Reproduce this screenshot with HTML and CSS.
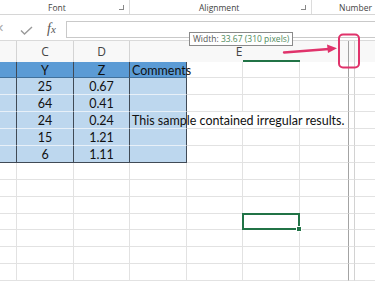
FILE: index.html
```html
<!DOCTYPE html>
<html lang="en">
<head>
  <meta charset="UTF-8">
  <title>Column width</title>
  <meta name="viewport" content="width=device-width, initial-scale=1.0">
  <link rel="stylesheet" href="styles.css">
</head>
<body>
  <div class="ribbon">
    <div class="group g-font"><span class="label">Font</span><i class="launcher"></i></div>
    <div class="group g-align"><span class="label">Alignment</span><i class="launcher"></i></div>
    <div class="group g-num"><span class="label">Number</span></div>
  </div>

  <div class="fbar">
    <span class="fb-x">✕</span>
    <svg class="fb-check" width="13" height="9" viewBox="0 0 13 9">
      <polyline points="1,4.5 4.5,8 12,1" fill="none" stroke="#9a9a9a" stroke-width="1.4"/>
    </svg>
    <span class="fb-fx">f<span class="sub">x</span></span>
    <div class="fb-input"></div>
  </div>

  <div class="colhead">
    <div class="hd hd-b"></div>
    <div class="hd hd-c">C</div>
    <div class="hd hd-d">D</div>
    <div class="hd hd-e">E</div>
    <div class="hd hd-gap"></div>
    <div class="hd hd-rest"></div>
  </div>

  <div class="grid" id="grid"></div>

  <div class="tip">Width: <span class="num">33.67 (310 pixels)</span></div>

  <svg class="marks" width="375" height="281" viewBox="0 0 375 281">
    <line x1="284" y1="52.5" x2="329" y2="49" stroke="#e0336b" stroke-width="2.4" stroke-linecap="round"/>
    <polygon points="337,48.3 327,44.6 328,53" fill="#e0336b"/>
    <rect x="339" y="34.5" width="20" height="33" rx="4" fill="none" stroke="#e0336b" stroke-width="2"/>
  </svg>

  <script>
    const cols = 9;
    const rows = 13;
    const table = [
      ["", "Y", "Z", "Comments"],
      ["", "25", "0.67", ""],
      ["", "64", "0.41", ""],
      ["", "24", "0.24", "This sample contained irregular results."],
      ["", "15", "1.21", ""],
      ["", "6", "1.11", ""]
    ];
    const grid = document.getElementById("grid");

    for (let r = 0; r < rows; r++) {
      for (let c = 0; c < cols; c++) {
        const cell = document.createElement("div");
        cell.className = "cell col" + c;

        if (r < table.length && c < 4) {
          cell.classList.add(r === 0 ? "th" : "td");
          if (r === table.length - 1) cell.classList.add("last");
          cell.textContent = table[r][c];
          if (c === 3) cell.classList.add("left");
        }
        // long comment spills over E..G, so those gridlines are hidden
        if (r === 3 && (c === 4 || c === 5)) cell.classList.add("spill");
        if (r === 9 && c === 5) cell.classList.add("sel");

        grid.appendChild(cell);
      }
    }
  </script>
</body>
</html>
```

FILE: styles.css
```css
body {
  margin: 0;
  width: 375px;
  height: 281px;
  overflow: hidden;
  position: relative;
  background: #fff;
  font-family: 'Open Sans', sans-serif;
  color: #222;
}

/* ribbon group labels */
.ribbon {
  display: flex;
  height: 14px;
  background: #fff;
  border-bottom: 1px solid #d6d6d6;
}
.group {
  display: flex;
  align-items: center;
  font-size: 8.5px;
  color: #444;
  border-right: 1px solid #dcdcdc;
  box-sizing: border-box;
}
.g-font {
  width: 130px;
  padding-left: 48px;
}
.g-align {
  width: 182px;
  padding-left: 69px;
}
.g-num {
  flex: 1;
  padding-left: 27px;
  border-right: none;
}
.launcher {
  margin-left: auto;
  margin-right: 5px;
  width: 4px;
  height: 4px;
  border-right: 1px solid #888;
  border-bottom: 1px solid #888;
}

/* formula bar */
.fbar {
  display: flex;
  align-items: flex-start;
  height: 25px;
  background: #fff;
}
.fb-x {
  margin-left: -5px;
  margin-top: 5px;
  font-size: 11px;
  color: #aaa;
}
.fb-check {
  margin-left: 16px;
  margin-top: 11px;
}
.fb-fx {
  margin-left: 14px;
  margin-top: 6px;
  font-family: 'Liberation Serif', serif;
  font-style: italic;
  font-size: 14px;
  color: #555;
}
.fb-fx .sub {
  font-size: 11px;
}
.fb-input {
  flex: 1;
  margin-left: 10px;
  margin-top: 6px;
  height: 17px;
  border: 1px solid #c9c9c9;
  border-right: none;
  box-sizing: border-box;
}

/* column headers */
.colhead {
  display: flex;
  height: 21.5px;
  background: #f8f8f8;
  border-top: 1px solid #dadada;
  box-sizing: border-box;
  font-size: 12px;
  color: #444;
}
.hd {
  display: flex;
  align-items: center;
  justify-content: center;
  border-right: 1px solid #d4d4d4;
  box-sizing: border-box;
}
.hd-b { width: 17px; }
.hd-c { width: 57px; }
.hd-d { width: 56px; }
.hd-e {
  width: 219px;
  position: relative;
  border-right-color: #a0a0a0;
}
.hd-e::after {
  content: "";
  position: absolute;
  left: 113px;
  width: 57px;
  bottom: 0;
  height: 2px;
  background: #217346;
}
.hd-gap { width: 6px; }
.hd-rest { flex: 1; border-right: none; }

/* sheet */
.grid {
  display: grid;
  grid-template-columns: 17px 57px 56px 57px 56px 57px 49px 6px 1fr;
  grid-auto-rows: 16.9px;
  font-family: Lato, sans-serif;
  font-size: 12.5px;
  color: #111;
}
.cell {
  border-right: 1px solid #e2e2e2;
  border-bottom: 1px solid #e2e2e2;
  box-sizing: border-box;
  white-space: nowrap;
  text-align: center;
  line-height: 17px;
  padding: 0 2px;
}
.col6 { border-right-color: #a3a3a3; }
.col7 { border-right-color: #d2d2d2; }
.col8 { border-right: none; }

.td, .th {
  background: #bdd7ee;
  border-right-color: #404a56;
  border-bottom-color: #e8f0f8;
}
.th {
  background: #5b9bd5;
  border-bottom-color: #41719c;
}
.td.last {
  border-bottom-color: #404a56;
}
.left {
  text-align: left;
}
.spill {
  border-right-color: transparent;
}

.sel {
  position: relative;
  border: 2px solid #217346;
  margin: -1px 0 0 -1px;
}
.sel::after {
  content: "";
  position: absolute;
  right: -4px;
  bottom: -4px;
  width: 4px;
  height: 4px;
  background: #217346;
  border: 1px solid #fff;
}

/* resize tooltip and the pink call-out */
.tip {
  position: absolute;
  left: 189px;
  top: 32px;
  height: 12px;
  padding: 0 3px;
  background: #fff;
  border: 1px solid #8a8a8a;
  font-size: 8.5px;
  line-height: 12px;
  color: #555;
}
.tip .num {
  color: #4f8a5c;
}
.marks {
  position: absolute;
  left: 0;
  top: 0;
  pointer-events: none;
}
```
